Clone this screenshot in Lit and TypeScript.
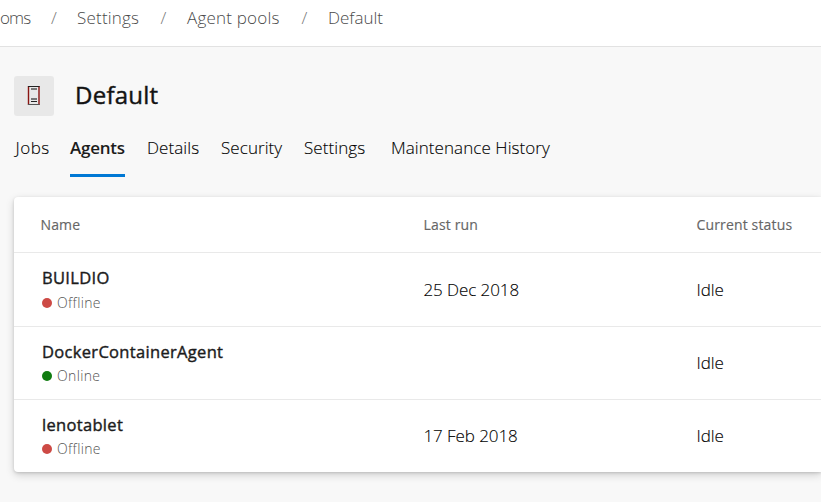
import { LitElement, html, css } from "lit";
import { customElement, property } from "lit/decorators.js";

@customElement("status-mark")
class StatusMark extends LitElement {
  @property({ type: Boolean }) online = false;
  static styles = css`
    :host { display: flex; align-items: center; gap: 5px; height: 20px; font-size: 14px; font-weight: 300; color: #555; letter-spacing: 0.35px; }
    .dot { width: 10px; height: 10px; margin-top: 1px; border-radius: 50%; background: #cd4a45; }
    .on { background: #107c10; }
  `;
  render() {
    return html`<span class="dot ${this.online ? "on" : ""}"></span><span>${this.online ? "Online" : "Offline"}</span>`;
  }
}

@customElement("app-root")
class AppRoot extends LitElement {
  static styles = css`
    * { box-sizing: border-box; }
    :host { display: block; height: 502px; overflow: hidden; background: #f8f8f8; color: #111; font-family: "Open Sans", "Noto Sans", sans-serif; white-space: nowrap; }
    .crumbs { display: grid; grid-template-columns: 31px 46px 63px 47px 94px 47px 1fr; height: 47px; background: #fff; border-bottom: 1px solid #e2e2e2; line-height: 36px; font-size: 17px; font-weight: 300; color: #4a4a4a; letter-spacing: 0.2px; }
    .crumbs .first { letter-spacing: -0.9px; }
    .crumbs span:last-child { letter-spacing: 0; }
    .slash { color: #777; text-align: center; }
    .title { display: flex; align-items: center; gap: 21px; height: 40px; margin: 29px 0 0 14px; }
    .tile { width: 40px; height: 40px; border-radius: 3px; background: #e8e8e8; }
    .tile svg { display: block; }
    h1 { margin: 0; font-size: 24px; font-weight: 400; line-height: 38px; height: 40px; letter-spacing: 0.25px; -webkit-text-stroke: 0.45px #1c1c1c; }
    .tabs { display: grid; grid-template-columns: 55px 77px 74px 83px 87px 160px; grid-template-rows: 61px; margin-left: 15px; font-size: 17px; font-weight: 300; line-height: 64px; letter-spacing: 0.07px; color: #000; -webkit-text-stroke: 0.12px #000; }
    .tabs span:first-child { letter-spacing: 0.5px; padding-left: 0.5px; }
    .active { width: 55px; height: 61px; font-weight: 600; letter-spacing: -0.25px; color: #1c1c1c; border-bottom: 3px solid #0078d4; -webkit-text-stroke: 0; }
    .card { margin: 20px 0 0 14px; height: 275px; background: #fff; border-radius: 4px 0 0 4px; box-shadow: 0 3px 8px rgba(0,0,0,.16), 0 1px 3px rgba(0,0,0,.14); }
    .row { display: grid; grid-template-columns: 381.5px 273px 1fr; padding: 0 0 1px 28px; height: 73px; align-items: center; border-top: 1px solid #e9e9e9; font-size: 17px; font-weight: 300; letter-spacing: -0.08px; color: #000; -webkit-text-stroke: 0.12px #000; }
    .head { height: 55px; padding: 0 0 0 26.5px; border: 0; font-size: 14px; font-weight: 400; color: #666; grid-template-columns: 383px 273px 1fr; letter-spacing: 0.15px; -webkit-text-stroke: 0.15px #666; }
    .row:nth-child(2) { height: 74px; }
    .name { font-size: 16.5px; font-weight: 400; line-height: 24px; height: 26px; letter-spacing: 0.32px; color: #1c1c1c; -webkit-text-stroke: 0.4px #1c1c1c; }
    status-mark { -webkit-text-stroke: 0; }
  `;

  private crumbs = ["Settings", "Agent pools", "Default"];
  private tabs = ["Jobs", "Agents", "Details", "Security", "Settings", "Maintenance History"];
  private agents = [
    { name: "BUILDIO", online: false, last: "25 Dec 2018" },
    { name: "DockerContainerAgent", online: true, last: "" },
    { name: "lenotablet", online: false, last: "17 Feb 2018" },
  ];

  render() {
    return html`
      <nav class="crumbs"><span class="first">oms</span>${this.crumbs.map((c) => html`<span class="slash">/</span><span>${c}</span>`)}</nav>
      <header class="title">
        <div class="tile">
          <svg width="40" height="40" viewBox="0 0 40 40" fill="none">
            <path d="M14.5 10v19M25 10v19" stroke="#8a1512" stroke-width="1.4" />
            <path d="M14 10.5h11.5" stroke="#222" />
            <path d="M14 28.5h11.5" stroke="#555" />
            <path d="M17 13h6M17 23h6" stroke="#777" stroke-width="2" />
            <path d="M17 25.5h6" stroke="#222" />
          </svg>
        </div>
        <h1>Default</h1>
      </header>
      <nav class="tabs">${this.tabs.map((t) => html`<span class=${t === "Agents" ? "active" : ""}>${t}</span>`)}</nav>
      <section class="card">
        <div class="row head"><span>Name</span><span>Last run</span><span>Current status</span></div>
        ${this.agents.map((a) => html`<div class="row">
          <div><div class="name">${a.name}</div><status-mark ?online=${a.online}></status-mark></div>
          <span>${a.last}</span><span>Idle</span>
        </div>`)}
      </section>
    `;
  }
}
